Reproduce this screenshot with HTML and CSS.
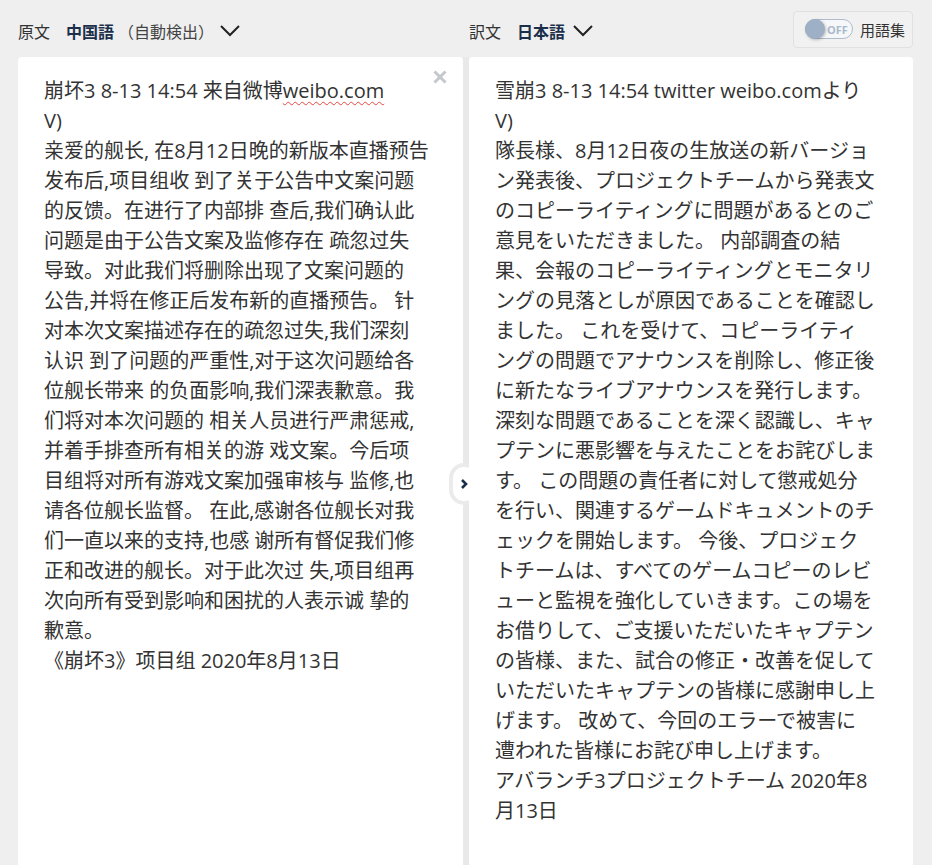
FILE: index.html
```html
<!DOCTYPE html>
<html lang="ja">
<head>
    <meta charset="UTF-8">
    <meta name="viewport" content="width=device-width, initial-scale=1.0">
    <title>翻訳</title>
    <link rel="stylesheet" href="styles.css">
</head>
<body>
    <div class="workspace">
        <!-- Source column -->
        <section class="col col-source">
            <header class="lang-bar">
                <span class="lang-label">原文</span>
                <span class="lang-name">中国語</span>
                <span class="lang-detect">（自動検出）</span>
                <svg class="lang-caret" viewBox="0 0 20 12" fill="none" stroke="currentColor" stroke-width="2">
                    <polyline points="1,1 10,10 19,1"></polyline>
                </svg>
            </header>
            <div class="panel">
                <button class="clear-btn" aria-label="clear">
                    <svg viewBox="0 0 14 14" fill="none" stroke="currentColor" stroke-width="3">
                        <line x1="1.5" y1="1.5" x2="12.5" y2="12.5"></line>
                        <line x1="12.5" y1="1.5" x2="1.5" y2="12.5"></line>
                    </svg>
                </button>
                <div class="text text-zh">崩坏3 8-13 14:54 来自微博<span class="misspelled">weibo.com</span><br>V)<br>亲爱的舰长, 在8月12日晚的新版本直播预告<br>发布后,项目组收 到了关于公告中文案问题<br>的反馈。在进行了内部排 查后,我们确认此<br>问题是由于公告文案及监修存在 疏忽过失<br>导致。对此我们将删除出现了文案问题的<br>公告,并将在修正后发布新的直播预告。 针<br>对本次文案描述存在的疏忽过失,我们深刻<br>认识 到了问题的严重性,对于这次问题给各<br>位舰长带来 的负面影响,我们深表歉意。我<br>们将对本次问题的 相关人员进行严肃惩戒,<br>并着手排查所有相关的游 戏文案。今后项<br>目组将对所有游戏文案加强审核与 监修,也<br>请各位舰长监督。 在此,感谢各位舰长对我<br>们一直以来的支持,也感 谢所有督促我们修<br>正和改进的舰长。对于此次过 失,项目组再<br>次向所有受到影响和困扰的人表示诚 挚的<br>歉意。<br>《崩坏3》项目组 2020年8月13日</div>
            </div>
        </section>

        <div class="divider">
            <button class="swap-btn" aria-label="swap">
                <svg viewBox="0 0 8 12" fill="none" stroke="currentColor" stroke-width="2.6">
                    <polyline points="2,2 6,6 2,10"></polyline>
                </svg>
            </button>
        </div>

        <!-- Target column -->
        <section class="col col-target">
            <header class="lang-bar">
                <span class="lang-label">訳文</span>
                <span class="lang-name">日本語</span>
                <svg class="lang-caret" viewBox="0 0 20 12" fill="none" stroke="currentColor" stroke-width="2">
                    <polyline points="1,1 10,10 19,1"></polyline>
                </svg>
                <div class="glossary">
                    <span class="switch">
                        <span class="switch-knob"></span>
                        <span class="switch-text">OFF</span>
                    </span>
                    <span class="glossary-label">用語集</span>
                </div>
            </header>
            <div class="panel">
                <div class="text text-ja">雪崩3 8-13 14:54 twitter weibo.comより<br>V)<br>隊長様、8月12日夜の生放送の新バージョ<br>ン発表後、プロジェクトチームから発表文<br>のコピーライティングに問題があるとのご<br>意見をいただきました。 内部調査の結<br>果、会報のコピーライティングとモニタリ<br>ングの見落としが原因であることを確認し<br>ました。 これを受けて、コピーライティ<br>ングの問題でアナウンスを削除し、修正後<br>に新たなライブアナウンスを発行します。<br>深刻な問題であることを深く認識し、キャ<br>プテンに悪影響を与えたことをお詫びしま<br>す。 この問題の責任者に対して懲戒処分<br>を行い、関連するゲームドキュメントのチ<br>ェックを開始します。 今後、プロジェク<br>トチームは、すべてのゲームコピーのレビ<br>ューと監視を強化していきます。この場を<br>お借りして、ご支援いただいたキャプテン<br>の皆様、また、試合の修正・改善を促して<br>いただいたキャプテンの皆様に感謝申し上<br>げます。 改めて、今回のエラーで被害に<br>遭われた皆様にお詫び申し上げます。<br>アバランチ3プロジェクトチーム 2020年8<br>月13日</div>
            </div>
        </section>
    </div>
</body>
</html>
```

FILE: styles.css
```css
body {
    margin: 0;
    background: #efefef;
    color: #333333;
    font-family: "Open Sans", "Noto Sans CJK JP", sans-serif;
    overflow: hidden;
}

.workspace {
    display: flex;
    padding: 0 19px 0 18px;
    height: 865px;
}

.col {
    display: flex;
    flex-direction: column;
}

.col-source {
    width: 445px;
}

.col-target {
    width: 444px;
}

/* language bar */
.lang-bar {
    display: flex;
    align-items: center;
    height: 57px;
    padding-top: 5px;
    box-sizing: border-box;
    font-family: "Open Sans", "Noto Sans CJK JP", sans-serif;
    font-size: 16px;
}

.lang-label {
    color: #333333;
    margin-right: 16px;
}

.lang-name {
    color: #1b2f4b;
    font-weight: bold;
}

.lang-detect {
    color: #444444;
    margin-left: 4px;
}

.lang-caret {
    width: 20px;
    height: 12px;
    margin-left: 6px;
    color: #222222;
}

.col-target .lang-caret {
    margin-left: 8px;
}

.glossary {
    margin-left: auto;
    display: flex;
    align-items: center;
    width: 120px;
    height: 37px;
    box-sizing: border-box;
    padding-left: 11px;
    margin-top: -4px;
    border: 1px solid #e1e1e1;
    border-radius: 4px;
    background: #f1f1f1;
}

.switch {
    position: relative;
    display: flex;
    align-items: center;
    width: 48px;
    height: 20px;
    box-sizing: border-box;
    border: 1px solid #aebcce;
    border-radius: 10px;
    background: #f6f7f9;
}

.switch-knob {
    position: absolute;
    left: -1px;
    top: -1px;
    width: 20px;
    height: 20px;
    border-radius: 50%;
    background: #9db0c5;
    box-shadow: 1px 1px 3px rgba(0, 0, 0, 0.25);
}

.switch-text {
    margin-left: 21px;
    font-size: 11px;
    font-weight: bold;
    color: #a9b9cb;
    line-height: 1;
}

.glossary-label {
    margin-left: 7px;
    font-size: 15px;
    color: #333333;
}

/* panels */
.panel {
    position: relative;
    flex: 1;
    background: #ffffff;
    border-radius: 4px 4px 0 0;
    padding: 19px 26px;
}

.text {
    font-size: 20px;
    line-height: 30px;
    white-space: nowrap;
    color: #333333;
}

.text-zh {
    font-family: "Open Sans", "Noto Sans CJK SC", sans-serif;
}

.text-ja {
    font-family: "Open Sans", "Noto Sans CJK JP", sans-serif;
}

.misspelled {
    text-decoration: underline wavy #e5473f;
    text-decoration-thickness: 1px;
    text-underline-offset: 3px;
}

.clear-btn {
    position: absolute;
    top: 13px;
    right: 16px;
    width: 14px;
    height: 14px;
    padding: 0;
    border: none;
    background: none;
    color: #c4c8cc;
    cursor: pointer;
}

.clear-btn svg {
    display: block;
    width: 14px;
    height: 14px;
}

/* center divider */
.divider {
    position: relative;
    width: 6px;
    margin-top: 57px;
    background: #e9e9e9;
}

.swap-btn {
    position: absolute;
    left: -14px;
    top: 406px;
    width: 30px;
    height: 42px;
    padding: 0;
    box-sizing: border-box;
    border: 4px solid #ebebeb;
    border-radius: 15px;
    background: #ffffff;
    color: #1b2f4b;
    display: flex;
    align-items: center;
    justify-content: center;
    cursor: pointer;
}

.swap-btn svg {
    width: 8px;
    height: 12px;
}
```
